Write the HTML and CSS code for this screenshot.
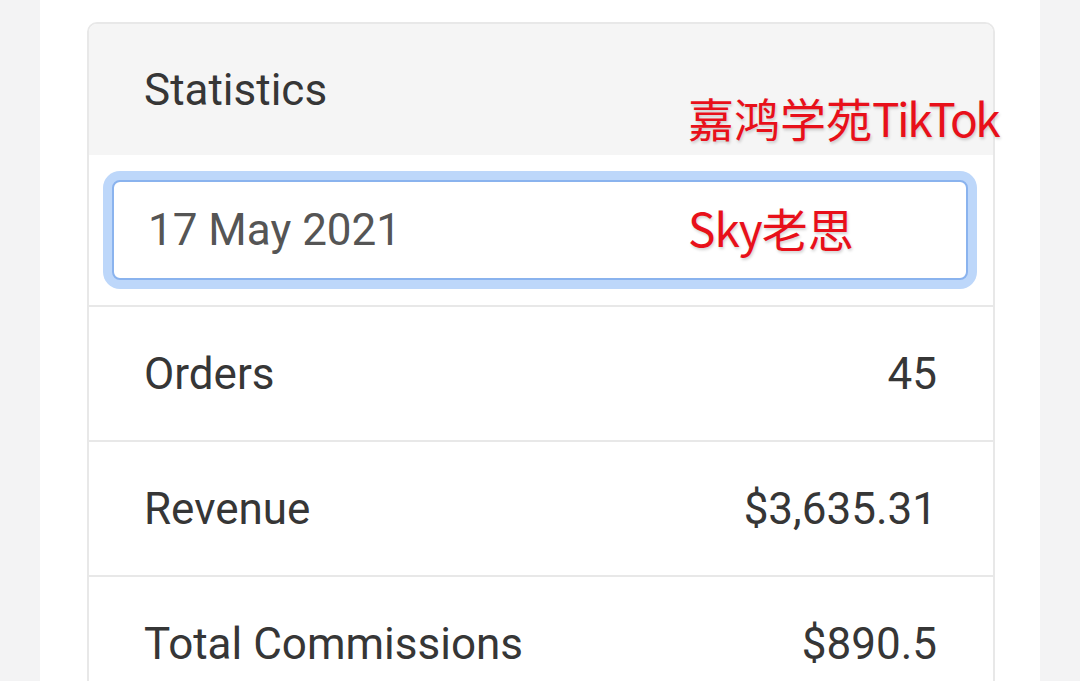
FILE: index.html
```html
<!DOCTYPE html>
<html lang="zh">
<head>
<meta charset="utf-8">
<title>Statistics</title>
<link rel="stylesheet" href="styles.css">
</head>
<body>
<div class="page">
  <section class="card">
    <header class="card-header">Statistics</header>
    <div class="card-body">
      <input class="date-input" type="text" value="17 May 2021">
    </div>
    <div class="stat-row"><span>Orders</span><span>45</span></div>
    <div class="stat-row"><span>Revenue</span><span>$3,635.31</span></div>
    <div class="stat-row"><span>Total Commissions</span><span>$890.5</span></div>
  </section>
  <div class="watermark wm-1">嘉鸿学苑<span class="wm-latin">TikTok</span></div>
  <div class="watermark wm-2"><span class="wm-latin">Sky</span>老思</div>
</div>
</body>
</html>
```
FILE: styles.css
```css
html, body {
  margin: 0;
  height: 100%;
}
body {
  background: #f3f3f4;
  font-family: Roboto, "Noto Sans", sans-serif;
  overflow: hidden;
}
.page {
  position: relative;
  margin: 0 40px;
  height: 681px;
  background: #ffffff;
  padding: 22px 45px 0 47px;
  box-sizing: border-box;
  overflow: hidden;
}
.card {
  border: 2px solid #e8e8e8;
  border-radius: 10px;
  overflow: hidden;
}
.card-header {
  height: 131px;
  background: #f5f5f5;
  display: flex;
  align-items: center;
  padding-left: 55px;
  font-size: 44px;
  color: #363636;
}
.card-body {
  padding: 25px 25px 25px 23px;
  border-bottom: 2px solid #e8e8e8;
}
.date-input {
  display: block;
  width: 100%;
  height: 100px;
  box-sizing: border-box;
  border: 2px solid #8ab3ee;
  border-radius: 8px;
  box-shadow: 0 0 0 9px #bdd7fa;
  outline: none;
  padding: 0 0 0 34px;
  font-family: Roboto, sans-serif;
  font-size: 44px;
  color: #555555;
  background: #ffffff;
}
.stat-row {
  display: flex;
  justify-content: space-between;
  align-items: center;
  height: 133px;
  padding: 0 56px 0 55px;
  border-bottom: 2px solid #e8e8e8;
  font-size: 44px;
  color: #363636;
}
.watermark {
  position: absolute;
  left: 648px;
  font-family: "Noto Sans CJK SC", "Noto Sans", sans-serif;
  font-size: 46px;
  line-height: 1;
  color: #e8101a;
  text-shadow: 1px 2px 3px rgba(0, 0, 0, 0.18);
  white-space: nowrap;
}
.wm-1 .wm-latin {
  letter-spacing: -2.5px;
}
.wm-2 .wm-latin {
  letter-spacing: -1px;
}
.wm-1 {
  top: 94px;
}
.wm-2 {
  top: 204px;
}
```
